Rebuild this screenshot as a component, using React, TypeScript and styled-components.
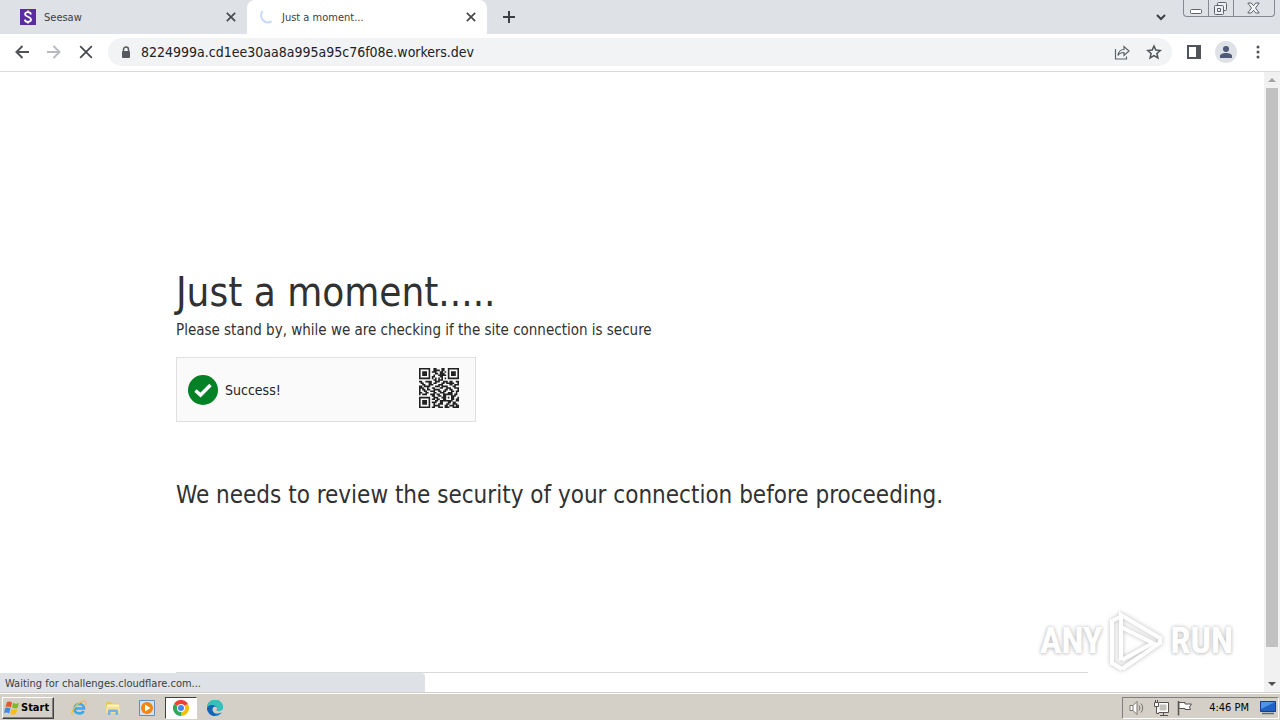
import React from "react";
import styled, { createGlobalStyle } from "styled-components";

const ui = `"Tahoma", "DejaVu Sans Condensed", "DejaVu Sans", "Noto Sans", sans-serif`;

const GlobalStyle = createGlobalStyle`
  * { box-sizing: border-box; }
  body { margin: 0; background: #fff; font-family: ${ui}; color: #202124; }
  button, input { font: inherit; color: inherit; border: 0; padding: 0; background: none; }
  h1, h2, p { margin: 0; }
`;

const Desktop = styled.div`
  position: relative;
  display: flex;
  flex-direction: column;
  min-height: 100vh;
  overflow: hidden;
`;

const TabStrip = styled.header`
  display: flex;
  height: 34px;
  background: #dee1e6;
`;

const Tab = styled.div<{ $active?: boolean }>`
  display: flex;
  align-items: center;
  gap: 8px;
  flex: 0 1 ${(p) => (p.$active ? 240 : 247)}px;
  padding: 0 11px 0 ${(p) => (p.$active ? 11 : 20)}px;
  background: ${(p) => (p.$active ? "#fff" : "transparent")};
  border-radius: 8px 8px 0 0;
  font-size: 11px;
  color: #3c4043;
`;

const TabTitle = styled.span`
  flex: 1;
  white-space: nowrap;
`;

const IconButton = styled.button<{ $w?: number }>`
  display: flex;
  align-items: center;
  justify-content: center;
  flex: none;
  width: ${(p) => p.$w ?? 32}px;
  height: 34px;
`;

const TabClose = styled.button`
  display: flex;
  padding: 0;
`;

const Spacer = styled.div`
  flex: 1;
`;

const WindowControls = styled.div`
  display: flex;
  width: 92px;
  height: 17px;
  margin-left: 6px;
  margin-right: 5px;
  border: 1px solid #85888f;
  border-top: 0;
  border-radius: 0 0 4px 4px;
`;

const WindowButton = styled.button<{ $grow?: number }>`
  display: flex;
  flex: ${(p) => p.$grow ?? 25};
  align-items: center;
  justify-content: center;
  & + & { border-left: 1px solid #85888f; }
`;

const Toolbar = styled.nav`
  display: flex;
  align-items: center;
  height: 38px;
  padding: 0 6px 1px;
  border-bottom: 1px solid #d9dbde;
`;

const AddressBar = styled.label`
  display: flex;
  align-items: center;
  flex: 1;
  height: 28px;
  margin: 0 6px;
  padding: 0 2px 0 12px;
  border-radius: 14px;
  background: #f1f3f4;
`;

const AddressInput = styled.input`
  flex: 1;
  min-width: 0;
  height: 28px;
  margin-left: 9px;
  font-size: 14px;
  outline: none;
`;

const Avatar = styled.span`
  display: flex;
  align-items: center;
  justify-content: center;
  width: 22px;
  height: 22px;
  border-radius: 50%;
  background: #dee1e6;
`;

const Viewport = styled.div`
  position: relative;
  display: flex;
  flex: 1;
`;

const Page = styled.main`
  display: flex;
  flex-direction: column;
  flex: 1;
  padding: 192px 24px 0;
`;

const Column = styled.div`
  display: flex;
  flex-direction: column;
  flex: 1;
  width: 100%;
  max-width: 912px;
  margin: 0 auto;
  color: #313131;
`;

const Title = styled.h1`
  font-size: 40px;
  line-height: 56px;
  font-weight: 400;
`;

const Lead = styled.p`
  font-size: 15px;
  line-height: 20px;
`;

const Challenge = styled.section`
  display: flex;
  align-items: center;
  gap: 7px;
  width: 300px;
  height: 65px;
  margin-top: 17px;
  padding: 0 16px 0 11px;
  border: 1px solid #e0e0e0;
  background: #fafafa;
  font-size: 14px;
`;

const ChallengeText = styled.span`
  flex: 1;
  color: #232323;
`;

const QrFrame = styled.span`
  display: flex;
  align-self: flex-start;
  padding-top: 10px;
`;

const Notice = styled.h2`
  margin-top: 55px;
  font-size: 24px;
  line-height: 36px;
  font-weight: 400;
`;

const Footer = styled.footer`
  height: 20px;
  margin-top: auto;
  border-top: 1px solid #d9d9d9;
`;

const ScrollBar = styled.div`
  display: flex;
  flex-direction: column;
  align-items: center;
  width: 16px;
  background: #f1f1f1;
`;

const ScrollArrow = styled.button`
  display: flex;
  align-items: center;
  justify-content: center;
  width: 16px;
  height: 16px;
`;

const ScrollTrack = styled.div`
  flex: 1;
  width: 12px;
`;

const ScrollThumb = styled.div`
  height: 95%;
  background: #c1c1c1;
`;

const StatusBubble = styled.div`
  position: absolute;
  left: 0;
  bottom: 0;
  width: 425px;
  height: 19px;
  padding-left: 5px;
  border-radius: 0 4px 0 0;
  background: #dee1e6;
  font-size: 11px;
  line-height: 21px;
  color: #3c4043;
`;

const Watermark = styled.div`
  position: absolute;
  right: 47px;
  bottom: 18px;
  display: flex;
  align-items: center;
  gap: 4px;
  font-family: "Liberation Sans Narrow", "Roboto Condensed", "Liberation Sans", sans-serif;
  font-size: 36px;
  font-weight: 700;
  color: #fff;
  text-shadow: 0 0 4px #bbb, 0 1px 3px #ddd;
`;

const WatermarkMark = styled.svg`
  filter: drop-shadow(0 0 2px #bbb);
`;

const TaskBar = styled.footer`
  display: flex;
  align-items: center;
  height: 28px;
  padding: 2px 1px 0 2px;
  border-top: 1px solid #d4d0c8;
  box-shadow: inset 0 1px #fff;
  background: #d4d0c8;
`;

const StartButton = styled.button`
  display: flex;
  align-items: center;
  gap: 1px;
  width: 52px;
  height: 22px;
  margin-right: 9px;
  padding-left: 1px;
  border: 1px solid;
  border-color: #fff #404040 #404040 #fff;
  box-shadow: inset -1px -1px #808080;
  font-size: 11px;
  font-weight: 700;
  color: #000;
`;

const TaskButton = styled.button<{ $active?: boolean }>`
  display: flex;
  align-items: center;
  justify-content: center;
  width: 32px;
  height: 22px;
  margin-right: 2px;
  border: 1px solid transparent;
  ${(p) => p.$active && "background: #fff; border-color: #404040 #fff #fff #404040;"}
`;

const Tray = styled.div`
  display: flex;
  align-items: center;
  width: 157px;
  height: 22px;
  padding: 0 2px 0 6px;
  gap: 8px;
  border: 1px solid;
  border-color: #808080 #fff #fff #808080;
  font-size: 11px;
  color: #000;
`;

const Clock = styled.time`
  flex: 1;
  text-align: right;
  margin-right: 3px;
  white-space: nowrap;
`;

const qrRows = [
  "1111111001100011001111111",
  "1000001001111011001000001",
  "1011101011100110101011101",
  "1011101000110111001011101",
  "1011101001001111101011101",
  "1000001011000110001000001",
  "1111111010101010101111111",
  "0000000001101110000000000",
  "1100111100111001110110011",
  "0110001101100011011111001",
  "0011001110001110000110111",
  "1101111000111011110001100",
  "1110010011000110011100111",
  "1011011001111000110110001",
  "1001100111001101100011011",
  "1100110001100111001110010",
  "1011100111011001111110110",
  "0000000011001101100011100",
  "1111111001110011101011001",
  "1000001011011001100011011",
  "1011101000110111111110011",
  "1011101011100110001101100",
  "1011101001001110011001110",
  "1000001001111000110111011",
  "1111111011001110111001111",
];

const QrCode = () => (
  <svg width="40" height="40" viewBox="0 0 25 25" role="img" aria-label="QR code">
    <path
      fill="#222"
      d={qrRows
        .map((row, y) => [...row].map((c, x) => (c === "1" ? `M${x} ${y}h1v1h-1z` : "")).join(""))
        .join("")}
    />
  </svg>
);

const Cross = ({ size, width = 2 }: { size: number; width?: number }) => (
  <svg width={size} height={size} viewBox="0 0 12 12" stroke="#45484c" strokeWidth={width}>
    <path d="M1 1l10 10M11 1L1 11" />
  </svg>
);

export default function App() {
  return (
    <Desktop>
      <GlobalStyle />
      <TabStrip>
        <Tab>
          <svg width="16" height="16" viewBox="0 0 16 16">
            <path fill="#5b2ca0" d="M0 0h16v16H0z" />
            <path d="M11 5.500C10.500 2.500 5 2.500 5 5.300C5 8 11 7.600 11 10.600C11 13.600 5 13.600 4.800 10.600M8 1.500v2M8 12.500v2" fill="none" stroke="#fff" strokeWidth="1.800" />
          </svg>
          <TabTitle>Seesaw</TabTitle>
          <TabClose aria-label="Close tab"><Cross size={10} /></TabClose>
        </Tab>
        <Tab $active>
          <svg width="16" height="16" viewBox="0 0 16 16" fill="none" stroke="#c3d9fa" strokeWidth="2">
            <path d="M4.500 2.200A7 7 0 0 0 13.500 12.500" />
          </svg>
          <TabTitle>Just a moment...</TabTitle>
          <TabClose aria-label="Close tab"><Cross size={10} /></TabClose>
        </Tab>
        <IconButton $w={44} aria-label="New tab">
          <svg width="12" height="12" viewBox="0 0 12 12" stroke="#3c4043" strokeWidth="2"><path d="M6 0v12M0 6h12" /></svg>
        </IconButton>
        <Spacer />
        <IconButton aria-label="Search tabs">
          <svg width="10" height="7" viewBox="0 0 10 7" fill="none" stroke="#3c4043" strokeWidth="2"><path d="M1 1l4 4 4-4" /></svg>
        </IconButton>
        <WindowControls>
          <WindowButton aria-label="Minimize">
            <svg width="12" height="14" viewBox="0 0 12 14"><rect x=".5" y="8.500" width="11" height="4" rx="1" fill="#fff" stroke="#5f636b" /></svg>
          </WindowButton>
          <WindowButton aria-label="Restore">
            <svg width="13" height="14" viewBox="0 0 13 14" fill="#eef0f3" stroke="#5f636b">
              <rect x="3.500" y="1.500" width="9" height="8" rx="1" /><rect x=".5" y="4.500" width="9" height="9" rx="1" /><path d="M3.500 7.500h3v3h-3z" />
            </svg>
          </WindowButton>
          <WindowButton $grow={42} aria-label="Close">
            <svg width="13" height="12" viewBox="0 0 13 12"><path d="M.8 1h3.400l2.300 2.700L8.800 1h3.400L8.500 6l3.700 5H8.800L6.500 8.300 4.200 11H.8l3.700-5z" fill="#f7f8fa" stroke="#5f636b" /></svg>
          </WindowButton>
        </WindowControls>
      </TabStrip>

      <Toolbar>
        <IconButton aria-label="Back">
          <svg width="14" height="14" viewBox="0 0 14 14" fill="none" stroke="#505357" strokeWidth="2"><path d="M14 7H1.500M7.500 1l-6 6 6 6" /></svg>
        </IconButton>
        <IconButton aria-label="Forward">
          <svg width="14" height="14" viewBox="0 0 14 14" fill="none" stroke="#b9bbbe" strokeWidth="2"><path d="M0 7h12.500M6.500 1l6 6-6 6" /></svg>
        </IconButton>
        <IconButton aria-label="Stop loading"><Cross size={14} width={1.5} /></IconButton>
        <AddressBar>
          <svg width="12" height="13" viewBox="0 0 12 13"><path d="M3.500 5V3.500a2.500 2.500 0 0 1 5 0V5" fill="none" stroke="#56595d" strokeWidth="1.500" /><rect x="2" y="5" width="8" height="7" rx="1" fill="#56595d" /></svg>
          <AddressInput aria-label="Address" readOnly value="8224999a.cd1ee30aa8a995a95c76f08e.workers.dev" />
          <IconButton aria-label="Share">
            <svg width="16" height="15" viewBox="0 0 16 15" fill="none" stroke="#5f6368" strokeWidth="1.200"><path d="M1.500 4v10h11v-2.500M4 10.500c.5-4 2.500-6 6-6V1.500l5 4.500-5 4.500V7.500c-2.500 0-4.500.5-6 3z" /></svg>
          </IconButton>
          <IconButton aria-label="Bookmark">
            <svg width="16" height="16" viewBox="0 0 16 16" fill="none" stroke="#505357" strokeWidth="1.500"><path d="M8 2l1.800 4.100 4.400.4-3.300 3 1 4.400L8 11.600l-3.900 2.300 1-4.400-3.300-3 4.400-.4z" /></svg>
          </IconButton>
        </AddressBar>
        <IconButton aria-label="Side panel">
          <svg width="14" height="14" viewBox="0 0 14 14"><path d="M1 1h12v12H1z" fill="#fff" stroke="#505357" strokeWidth="2" /><path d="M9 1h4v12H9z" fill="#505357" /></svg>
        </IconButton>
        <IconButton aria-label="Profile">
          <Avatar><svg width="12" height="12" viewBox="0 0 12 12" fill="#4f5875"><circle cx="6" cy="3" r="3" /><path d="M0 12v-2c0-4 12-4 12 0v2z" /></svg></Avatar>
        </IconButton>
        <IconButton aria-label="Menu">
          <svg width="4" height="14" viewBox="0 0 4 14" fill="#505357"><circle cx="2" cy="2" r="1.500" /><circle cx="2" cy="7" r="1.500" /><circle cx="2" cy="12" r="1.500" /></svg>
        </IconButton>
      </Toolbar>

      <Viewport>
        <Page>
          <Column>
            <Title>Just a moment.....</Title>
            <Lead>Please stand by, while we are checking if the site connection is secure</Lead>
            <Challenge>
              <svg width="30" height="30" viewBox="0 0 30 30"><circle cx="15" cy="15" r="15" fill="#038127" /><path d="M7.500 15.500l5 4.500 10-10" fill="none" stroke="#fff" strokeWidth="3.500" /></svg>
              <ChallengeText>Success!</ChallengeText>
              <QrFrame><QrCode /></QrFrame>
            </Challenge>
            <Notice>We needs to review the security of your connection before proceeding.</Notice>
            <Footer />
          </Column>
        </Page>
        <ScrollBar>
          <ScrollArrow aria-label="Scroll up"><svg width="8" height="4" viewBox="0 0 8 4" fill="#a3a3a3"><path d="M0 4l4-4 4 4z" /></svg></ScrollArrow>
          <ScrollTrack><ScrollThumb /></ScrollTrack>
          <ScrollArrow aria-label="Scroll down"><svg width="8" height="4" viewBox="0 0 8 4" fill="#505050"><path d="M0 0l4 4 4-4z" /></svg></ScrollArrow>
        </ScrollBar>
        <StatusBubble>Waiting for challenges.cloudflare.com...</StatusBubble>
        <Watermark>
          <span>ANY</span>
          <WatermarkMark width="60" height="66" viewBox="0 0 60 66" fill="none" stroke="#fff" strokeWidth="4">
            <path d="M15 52V7l39 23v5L16 61" />
            <path d="M15 19l32 16-31 17" />
            <path d="M14 9l-8 4v42l10 6" />
          </WatermarkMark>
          <span>RUN</span>
        </Watermark>
      </Viewport>

      <TaskBar>
        <StartButton>
          <svg width="16" height="16" viewBox="0 0 16 16"><path d="M3 2q3-1 5 .5L7 7.500Q4 6 1.500 7z" fill="#e8562a" /><path d="M9 3q3 1.500 6 0l-1.500 5Q11 9 8 7.500z" fill="#7db928" /><path d="M1.200 8q3-1 5.300.5L5 13.500Q3 12 0 13z" fill="#3b8ede" /><path d="M7.500 9q3 1.500 6 0l-1.500 5q-3 1.200-6 0z" fill="#fbbc1a" /></svg>
          Start
        </StartButton>
        <TaskButton aria-label="Internet Explorer">
          <svg width="16" height="16" viewBox="0 0 16 16" fill="none">
            <path d="M3.500 8.500H13C13 2.500 3.500 2.500 3.500 8.500c0 6 7.500 6 9 2.500" stroke="#3fa9e6" strokeWidth="2.600" />
            <path d="M1.500 14.500C-1 12 6 2.500 12.500 1.200c3-.5 2.600 2 1.500 4" stroke="#f2c12e" strokeWidth="1.300" />
          </svg>
        </TaskButton>
        <TaskButton aria-label="Explorer">
          <svg width="16" height="16" viewBox="0 0 16 16">
            <path d="M1 2h5l1 1.500h7V13H1z" fill="#e9c65a" />
            <path d="M2 4.500h12v3H2z" fill="#fdf6d0" />
            <path d="M1 6.500h14V13H1z" fill="#f7e08e" />
            <path d="M3 15v-4q0-1.500 1.500-1.500h7Q13 9.500 13 11v4h-2.500v-3h-5v3z" fill="#6db5e8" />
          </svg>
        </TaskButton>
        <TaskButton aria-label="Media Player">
          <svg width="16" height="16" viewBox="0 0 16 16">
            <path d="M.5.5h15v15H.5z" fill="#cfe3f5" stroke="#5f8fbf" />
            <circle cx="8" cy="8" r="6" fill="#f28314" />
            <path d="M6 4.500v7L11.500 8z" fill="#fff" />
          </svg>
        </TaskButton>
        <TaskButton $active aria-label="Chrome">
          <svg width="16" height="16" viewBox="0 0 16 16">
            <path d="M8 8L1.070 4A8 8 0 0 1 14.930 4z" fill="#ea4335" />
            <path d="M8 8l6.930-4A8 8 0 0 1 8 16z" fill="#fbbc05" />
            <path d="M8 8v8A8 8 0 0 1 1.070 4z" fill="#34a853" />
            <circle cx="8" cy="8" r="4" fill="#fff" /><circle cx="8" cy="8" r="3" fill="#4285f4" />
          </svg>
        </TaskButton>
        <TaskButton aria-label="Edge">
          <svg width="16" height="16" viewBox="0 0 16 16">
            <circle cx="8" cy="8" r="8" fill="#1877c9" />
            <path d="M0 8a8 8 0 0 1 16-1c0 3-2.500 4.500-5 4-2-.4-1-1.500-1-2.800C10 4.500 3 4 0 8z" fill="#35c1b8" />
            <path d="M5.500 8.500c-1 4 4 6.500 9 4l1.500-1v-3c-1.500 3-5 3-6 2.300-.8-.6 0-1.300 0-2.600-.5-2-4-2-4.500.3z" fill="#d4d0c8" />
            <path d="M0 8c2-4 6-3.500 7.500-1.800C4.500 7 4 12 9 15.900A8 8 0 0 1 0 8z" fill="#1265b4" />
          </svg>
        </TaskButton>
        <Spacer />
        <Tray>
          <svg width="16" height="16" viewBox="0 0 16 16" fill="none" stroke="#77746e">
            <path d="M1 5.500h3l4-4v13l-4-4H1z" fill="#fff" /><path d="M10 5.500q2 2.500 0 5M12 3.500q3.500 4.500 0 9M4 5.500v5" />
          </svg>
          <svg width="16" height="16" viewBox="0 0 16 16" fill="none" stroke="#57544f">
            <path d="M5.500 3.500h9v8h-9z" fill="#c4c1ba" stroke="#fff" strokeWidth="2" /><path d="M6 2.500h9.500v10H4.500M7 15.500h8M10.500 13v2" /><path d="M1.500 2.500h4v4h-4zM2.500 0v2M4.500 0v2M3.500 7v6.500H6" fill="#fff" />
          </svg>
          <svg width="16" height="16" viewBox="0 0 16 16" stroke="#57544f">
            <path d="M1.500 1v14.500" fill="none" strokeWidth="1.500" /><path d="M2 2.500h6v1.500h6.500l-2 3 1 2.500H8V8.500H2z" fill="#fff" />
          </svg>
          <Clock>4:46 PM</Clock>
          <svg width="16" height="14" viewBox="0 0 16 14">
            <path d="M.5.5h15v10H.5z" fill="#2160c4" stroke="#173f86" /><path d="M1 1h14L1 8z" fill="#4f93e6" /><path d="M2 12.500h12" stroke="#5c6a80" strokeWidth="1.500" />
          </svg>
        </Tray>
      </TaskBar>
    </Desktop>
  );
}
